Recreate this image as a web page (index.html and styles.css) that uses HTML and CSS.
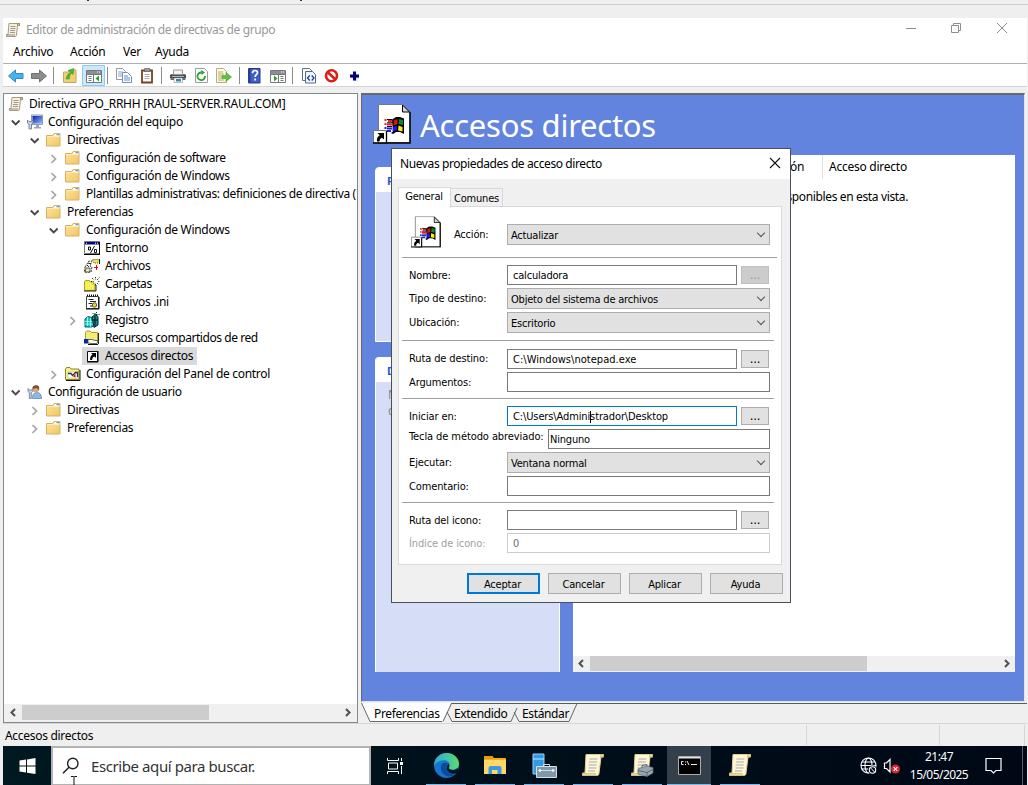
FILE: index.html
```html
<!DOCTYPE html>
<html lang="es">
<head>
<meta charset="utf-8">
<title>Editor de administración de directivas de grupo</title>
<link rel="stylesheet" href="styles.css">
</head>
<body>
<svg class="sprite" aria-hidden="true">
  <defs>
    <linearGradient id="gFold" x1="0" y1="0" x2="1" y2="1"><stop offset="0" stop-color="#ffe39a"/><stop offset="1" stop-color="#efc668"/></linearGradient>
    <linearGradient id="gEdge" x1="0" y1="0" x2="1" y2="0"><stop offset="0" stop-color="#2aa9dc"/><stop offset="1" stop-color="#5ddb6b"/></linearGradient>
    <linearGradient id="gMon" x1="0" y1="0" x2="1" y2="1"><stop offset="0" stop-color="#0a1fa8"/><stop offset="1" stop-color="#8fb8ff"/></linearGradient>
  </defs>
  <symbol id="scroll" viewBox="0 0 16 16"><path d="M4 1.500h10.500v2H12.500l-1 9.500c0 1-.5 1.500-1.500 1.500H1.500v-2H3z" fill="#f7efd8" stroke="#a59c85"/><path d="M12.500 1.500h2v2h-2zM1 13h9" fill="#d8cb98" stroke="#968e76"/><path d="M5.500 4.500h5M5.500 6.500h5M5 8.500h5M5 10.500h5" stroke="#9c9ca0"/></symbol>
  <symbol id="folder" viewBox="0 0 16 16"><path d="M.5 3.500h6.500l1-2h6v12.500H.5z" fill="url(#gFold)" stroke="#d8b162"/><path d="M8.500 2h5v2H7.500z" fill="#fff"/><path d="M10.500 2h3v1.300h-3z" fill="#4ca3e6"/><path d="M1 4.500h12.500" stroke="#ffedb8" fill="none"/></symbol>
  <symbol id="computer" viewBox="0 0 16 16"><path d="M4.500 1h11v9.500h-11z" fill="#d9e2ee" stroke="#8c9bb0"/><path d="M5.500 2H15v7.500H5.500z" fill="url(#gMon)"/><path d="M9 11h3v2h2v1.500H7V13h2z" fill="#97a6bd"/><path d="M.5 6v3L2 10.200V15h2.500v-4.800L6 9V6L4.500 7.500H2z" fill="#c9d4e2" stroke="#60718c" stroke-width=".8"/></symbol>
  <symbol id="user" viewBox="0 0 16 16"><path d="M5.500 14.500c0-4 1-5.500 4-6 3.500 0 5 2 5 6z" fill="#8fb8e2" stroke="#587da8" stroke-width=".7"/><circle cx="9" cy="5.500" r="3" fill="#dda873"/><path d="M5.500 5C5 1.500 8 .8 10 1.300c2.500.5 2.500 3 2 5L9.500 4z" fill="#7b5330"/><path d="M1 4.500v3L2.300 8.700v5.800h2V8.700L5.800 7.500v-3L4.500 6H2.300z" fill="#c2d0df" stroke="#667b95" stroke-width=".8"/></symbol>
  <symbol id="envi" viewBox="0 0 16 16"><path d="M.5 1.500h15v12H.5z" fill="#fff" stroke="#777"/><path d="M0 14.500h16M15.500 2v12" stroke="#000"/><path d="M1 2h14v2.500H1z" fill="#000082"/><path d="M2 3.200h1M11 3.200h1M13 3.200h1" stroke="#fff"/><path d="M10.500 6l-4 7M4.500 7h2v3h-2zM10.500 9.500h2v3h-2z" fill="none" stroke="#111"/></symbol>
  <symbol id="files" viewBox="0 0 16 16"><path d="M1 9l4-6h3L6 8l2 1-1 5H.5z" fill="#fff" stroke="#333" stroke-dasharray="2 1"/><path d="M2 10h4v4H1z" fill="#e8e6c2" stroke="#222" stroke-width=".7"/><path d="M3 7l2 2M4 5l3 1" stroke="#222"/><path d="M8.500 1.500h7v3.500H10z" fill="#f0e535" stroke="#555" stroke-dasharray="1 1"/><path d="M15.500 1v5" stroke="#111"/><path d="M12.500 7v5M10 9.500h4" stroke="#e00"/></symbol>
  <symbol id="nfold" viewBox="0 0 16 16"><path d="M.5 6l1-1.500h4L6.500 6H11v8.500H.5z" fill="#f3ec46" stroke="#a5a218"/><path d="M0 15h12V9" stroke="#222" fill="none"/><path d="M2 8h8M2 10h8M2 12h8" stroke="#fffcae" stroke-dasharray="1 1"/><path d="M11.500 1v9M8 2l7 7M15.500 1.500L8.500 8.500M7 5.500h9" stroke="#222" stroke-dasharray="1.200 1.200"/><circle cx="11.500" cy="5.500" r="1.700" fill="#fff"/></symbol>
  <symbol id="ini" viewBox="0 0 16 16"><path d="M2.500 2.500h12v12h-12z" fill="#fff" stroke="#444"/><path d="M2 15h13V3" stroke="#000" fill="none"/><path d="M3 1.500h11" stroke="#111" stroke-dasharray="1 1" stroke-width="2"/><path d="M4.500 5.500h5M6 7.500h6M4.500 9.500h4M6 12h3" stroke="#222"/><circle cx="10.500" cy="11" r="2.200" fill="#e4dc2b" stroke="#555"/></symbol>
  <symbol id="reg" viewBox="0 0 16 16"><path d="M1 7l3-2.500 4 1v3l3-1v4l-3 3.500H1z" fill="#12c4c4" stroke="#066"/><path d="M1 9.500h9M1 12h8M3.500 5v9M6.500 6v9" stroke="#cff" stroke-width=".7"/><path d="M8 5l3-2.500 3 2V13l-4 2.500z" fill="#0a8f93" stroke="#022"/><path d="M11 4v10M9 8h5" stroke="#011"/><path d="M8.500 1.500h3M12.500 0v4M10.500 2.500h5" stroke="#033" stroke-dasharray="1 1"/></symbol>
  <symbol id="share" viewBox="0 0 16 16"><path d="M1.500 11V2.500l1-1.500H6l1.500 1.500h6V11h-9z" fill="#f3ec72" stroke="#a5a136"/><path d="M14.500 3v11" stroke="#222"/><path d="M0 9h4v4.500H0z" fill="#0028a4"/><path d="M4 9.500h4l3 1h3l-1 3H7l-3-.5z" fill="#fff" stroke="#444" stroke-width=".8"/><path d="M4 14.500h10" stroke="#111"/></symbol>
  <symbol id="lnk" viewBox="0 0 16 16"><path d="M3.500 3.500h10v10h-10z" fill="#fff" stroke="#111"/><path d="M14 3v11H3" stroke="#000" fill="none"/><path d="M7 5h5v5l-1.500-1.500C8.800 9 8.200 10 8.200 12H6.200C5.800 9.500 6.800 8 8.600 6.600z" fill="#000"/></symbol>
  <symbol id="panel" viewBox="0 0 16 16"><path d="M.5 13.500V3l1-1.500H5l1 1.500h8v10.500z" fill="#f7f08b" stroke="#8b8822"/><path d="M1 14.500h14V4" stroke="#111" fill="none"/><path d="M3 6h10v6H3z" fill="#fff" stroke="#aaa" stroke-width=".5"/><path d="M3 7.500h3l1.500 2 3-3h2V11" stroke="#333" fill="none" stroke-width="1.300"/><path d="M8 10.500l2.500-3v4z" fill="#cf1414"/></symbol>
  <symbol id="down" viewBox="0 0 16 16"><path d="M4.800 6.500l3.900 3.900 3.900-3.900" fill="none" stroke="#484848" stroke-width="1.900"/></symbol>
  <symbol id="right" viewBox="0 0 16 16"><path d="M6.500 5l4 4-4 4" fill="none" stroke="#a5a5a5" stroke-width="1.700"/></symbol>
  <symbol id="bigLnk" viewBox="0 0 38 40">
    <path d="M5.500.5h24L37 8v30.500H5.500z" fill="#fff" stroke="#777"/><path d="M37 8v31H5" fill="none" stroke="#000" stroke-width="1.500"/><path d="M29.500 1l7 7h-7z" fill="#d4d4d4" stroke="#000"/>
    <path d="M19 15.500l4-2.500h4l4 1.500v15.500l-4-2h-4l-3 2-2-1 2-1.500z" fill="#000"/>
    <path d="M21 16.500l3.500-1.500v5l-4 1.500z" fill="#e21212"/><path d="M26 15l4 1v5l-4.500-1z" fill="#0a8a26"/><path d="M20 23l4-1.500v4.500l-4.500 1.500z" fill="#1818f0"/><path d="M25.500 21.500l4 1.500v4.500l-4.500-1z" fill="#ffeb12"/>
    <path d="M11.500 16h2M15 17h4M11.500 20h2M14 20.500h6" stroke="#e22" stroke-width="2"/><path d="M11.500 24h2M14 24.500h5M11.500 28h1M14 27h4" stroke="#22d" stroke-width="2"/><path d="M14 15.500h5M14 18.800h6M14 22.500h5" stroke="#000"/>
    <path d="M.5 26.500h13v12.500H.5z" fill="#fff" stroke="#777"/><path d="M13.500 27v12H0" stroke="#000" fill="none" stroke-width="1.300"/><path d="M4.500 29h6.500v6.500l-2-1.800c-2 1-2.400 2-2.400 3.800H4c-.5-3 .5-4.800 2.700-6.300z" fill="#000"/>
  </symbol>
  <symbol id="bscroll" viewBox="0 0 24 24"><path d="M5 1.500h17.500v2.500H20L18 20c0 2-1 2.500-2.500 2.500H1.500V20H4z" fill="#fff6d4" stroke="#e0cf95"/><path d="M19.500 1.500h3v2.500h-3zM1.500 20.500h13v2h-13z" fill="#e7d9a0" stroke="#bda968" stroke-width=".5"/><path d="M8.500 6h8M8 9h8M7.500 12h8M7.500 15h8M7 18h7" stroke="#a9a9b6"/></symbol>
</svg>

<div class="screen">
  <div class="behind"><i></i><i></i></div>

  <div class="window">
    <header class="titlebar">
      <svg class="i16"><use href="#scroll"/></svg>
      <span class="title">Editor de administración de directivas de grupo</span>
      <svg class="winctl" viewBox="0 0 104 14"><path d="M1 7.500h10M46.500 4.500h7v7h-7zM48.500 4.500v-2h7v7h-2M92 2l10 10M102 2L92 12" fill="none" stroke="#8c8c8c"/></svg>
    </header>
    <nav class="menu"><span class="m1">Archivo</span><span class="m2">Acción</span><span class="m3">Ver</span><span>Ayuda</span></nav>
    <div class="toolbar">
      <svg width="356" height="22" viewBox="0 0 356 22">
        <path d="M5.500 12l7-6v3.500h7.500v5h-7.500V18z" fill="#44b4ee" stroke="#3a86b8"/>
        <path d="M43.500 12l-7-6v3.500h-8v5h8V18z" fill="#8d8d8d" stroke="#707070"/>
        <path d="M50.500 3v17M104.500 3v17M158.500 3v17M236.500 3v17M289.500 3v17" stroke="#8d8d8d"/>
        <path d="M60.500 18.500V8h5l1-2H73v12.500z" fill="#f2ce77" stroke="#c9a462"/><path d="M63 15c1-4 2-5 4.500-7L65 6.500l6-2-1 6-1.500-1.500c-2 2-2 4-2 6z" fill="#46bc2c" stroke="#3f9a30" stroke-width=".6"/>
        <path d="M79.500 1.500h22v20h-22z" fill="#cce8ff" stroke="#90c8f6"/>
        <path d="M83.500 6.500h15v12h-15z" fill="#fff" stroke="#75797e"/><path d="M84 7h14v3H84z" fill="#8b8e92"/><path d="M94 8h1M96 8h1" stroke="#fff"/><path d="M90.500 11v7M84 10.500h14" stroke="#75797e"/>
        <path d="M85.500 12.500h3M85.500 14.500h3M85.500 16.500h3" stroke="#777"/><path d="M96 11.500v6l-3.500-3z" fill="#2ba129"/>
        <path d="M113.500 4.500h6l3 3v8h-9z" fill="#fff" stroke="#999"/><path d="M115 8h5M115 10h5M115 12h4" stroke="#7fa9d5"/><path d="M119.500 8.500h5l4 4v6h-9z" fill="#fff" stroke="#7b8fa9"/><path d="M121 12h4M121 14h6M121 16h6" stroke="#5c91cd"/>
        <path d="M139 6.500h10v12h-10z" fill="#fff" stroke="#76421e" stroke-width="1.800"/><path d="M141.500 4.500h5.500v3h-5.500z" fill="#999" stroke="#444" stroke-width=".5"/><path d="M141.500 10.500h5M141.500 12.500h5M141.500 14.500h5" stroke="#a6a6a6"/>
        <path d="M167.500 10h15v6h-15z" fill="#666d75"/><path d="M167 11h16v3h-16z" fill="#4b5157"/><path d="M170.500 6h9v4.500h-9z" fill="#f2f2f2" stroke="#999"/><path d="M171 14h8.500v4.500H171z" fill="#fff" stroke="#777" stroke-width=".5"/><path d="M173 15h5v2.500h-5z" fill="#2e87b5"/><path d="M169 12.500h12" stroke="#adb3b8"/>
        <path d="M192.500 4.500h9l3 3v11h-12z" fill="#fff" stroke="#9c9c9c"/><path d="M202 12A3.800 3.800 0 1 1 198.500 8.500" stroke="#28a52b" fill="none" stroke-width="1.800"/><path d="M198 6l4 2.500-3.500 2.500z" fill="#28a52b"/>
        <path d="M213.500 4.500h7l3 3v11h-10z" fill="#fffbd7" stroke="#b6aa87"/><path d="M215 8h5M215 10h6M215 12h4M215 14h4M215 16h6" stroke="#b3aa85"/><path d="M219 11.500h4V8.500l5.500 4.500-5.500 4.500v-3H219z" fill="#55c73d" stroke="#4a9e3e" stroke-width=".6"/>
        <path d="M245.500 4.500h11.500v14.500h-11.500z" fill="#3c5fc8" stroke="#263b88"/><path d="M245 5h2.500v14H245z" fill="#2c3f94"/><path d="M249.500 9.300c0-3.600 5-3.600 5-.6 0 2-2.400 2-2.400 4.300M252.100 14.500v2" stroke="#fff" stroke-width="1.700" fill="none"/>
        <g transform="translate(184 0)"><path d="M83.500 6.500h15v12h-15z" fill="#fff" stroke="#75797e"/><path d="M84 7h14v3H84z" fill="#8b8e92"/><path d="M94 8h1M96 8h1" stroke="#fff"/><path d="M91.500 11v7M84 10.500h14" stroke="#75797e"/><path d="M93.500 12.500h3M93.500 14.500h3M93.500 16.500h3" stroke="#777"/><path d="M87 11.500v6l3.500-3z" fill="#2ba129"/></g>
        <path d="M299.500 4.500h7l3 3v9h-10z" fill="#fff" stroke="#5f7387"/><path d="M302.500 7.500h7l3 3v8.500h-10z" fill="#f3f8fc" stroke="#4e6b8b"/><path d="M306.800 11.500l-2.300 2.500 2.300 2.500M308.700 11.500l2.300 2.500-2.300 2.500" fill="none" stroke="#1b3fa8" stroke-width="1.300"/>
        <circle cx="328.500" cy="11.800" r="5.500" fill="#fff" stroke="#de1e12" stroke-width="2.600"/><path d="M324.800 8.300l7.400 7" stroke="#de1e12" stroke-width="2.600"/>
        <path d="M348 13.200h8.500M352.500 9v8" stroke="#b9b9c8" stroke-width="2"/><path d="M347 12h9M351.500 7.500v9" stroke="#010180" stroke-width="3"/>
      </svg>
    </div>

    <div class="panes">
      <aside class="tree">
        <ul class="rows">
          <li class="l0"><svg class="i16"><use href="#scroll"/></svg><span class="t0">Directiva GPO_RRHH [RAUL-SERVER.RAUL.COM]</span></li>
          <li class="l1"><svg class="ch"><use href="#down"/></svg><svg class="i16"><use href="#computer"/></svg><span>Configuración del equipo</span></li>
          <li class="l2"><svg class="ch"><use href="#down"/></svg><svg class="i16"><use href="#folder"/></svg><span>Directivas</span></li>
          <li class="l3"><svg class="ch"><use href="#right"/></svg><svg class="i16"><use href="#folder"/></svg><span class="tight">Configuración de software</span></li>
          <li class="l3"><svg class="ch"><use href="#right"/></svg><svg class="i16"><use href="#folder"/></svg><span>Configuración de Windows</span></li>
          <li class="l3"><svg class="ch"><use href="#right"/></svg><svg class="i16"><use href="#folder"/></svg><span class="tight">Plantillas administrativas: definiciones de directiva (</span></li>
          <li class="l2"><svg class="ch"><use href="#down"/></svg><svg class="i16"><use href="#folder"/></svg><span>Preferencias</span></li>
          <li class="l3"><svg class="ch"><use href="#down"/></svg><svg class="i16"><use href="#folder"/></svg><span>Configuración de Windows</span></li>
          <li class="l4"><i class="ch"></i><svg class="i16"><use href="#envi"/></svg><span>Entorno</span></li>
          <li class="l4"><i class="ch"></i><svg class="i16"><use href="#files"/></svg><span>Archivos</span></li>
          <li class="l4"><i class="ch"></i><svg class="i16"><use href="#nfold"/></svg><span class="tighter">Carpetas</span></li>
          <li class="l4"><i class="ch"></i><svg class="i16"><use href="#ini"/></svg><span>Archivos .ini</span></li>
          <li class="l4"><svg class="ch"><use href="#right"/></svg><svg class="i16"><use href="#reg"/></svg><span class="tighter">Registro</span></li>
          <li class="l4"><i class="ch"></i><svg class="i16"><use href="#share"/></svg><span class="tighter">Recursos compartidos de red</span></li>
          <li class="l4"><i class="ch"></i><b class="sel"><svg class="i16"><use href="#lnk"/></svg><span>Accesos directos</span></b></li>
          <li class="l3"><svg class="ch"><use href="#right"/></svg><svg class="i16"><use href="#panel"/></svg><span>Configuración del Panel de control</span></li>
          <li class="l1"><svg class="ch"><use href="#down"/></svg><svg class="i16"><use href="#user"/></svg><span class="tight">Configuración de usuario</span></li>
          <li class="l2"><svg class="ch"><use href="#right"/></svg><svg class="i16"><use href="#folder"/></svg><span>Directivas</span></li>
          <li class="l2"><svg class="ch"><use href="#right"/></svg><svg class="i16"><use href="#folder"/></svg><span>Preferencias</span></li>
        </ul>
        <div class="hscroll tree-scroll">
          <svg viewBox="0 0 18 17"><path d="M11 5L7.500 8.500 11 12" fill="none" stroke="#505050" stroke-width="2"/></svg>
          <i class="thumb thumb-tree"></i>
          <svg viewBox="0 0 18 17"><path d="M7 5l3.500 3.500L7 12" fill="none" stroke="#505050" stroke-width="2"/></svg>
        </div>
      </aside>

      <main class="result">
        <div class="blue">
          <div class="head"><svg width="38" height="40"><use href="#bigLnk"/></svg><h1>Accesos directos</h1></div>
          <div class="cols">
            <div class="side">
              <section class="card first"><h2>P</h2></section>
              <section class="card second"><h2>D</h2><p>N<br>d</p></section>
            </div>
            <div class="list">
              <div class="lhead"><span class="c1">ón</span><span class="c2">Acceso directo</span></div>
              <p class="empty">sponibles en esta vista.</p>
              <div class="hscroll list-scroll">
                <svg viewBox="0 0 18 17"><path d="M10 5L6.500 8.500 10 12" fill="none" stroke="#505050" stroke-width="2"/></svg>
                <i class="thumb thumb-list"></i>
                <svg viewBox="0 0 18 17"><path d="M8 5l3.500 3.500L8 12" fill="none" stroke="#505050" stroke-width="2"/></svg>
              </div>
            </div>
          </div>
        </div>
        <div class="tabs">
          <svg width="666" height="20" viewBox="0 0 666 20"><path d="M0 0h90l-9 18.500H9z" fill="#fff"/><path d="M90 .5h576" stroke="#5a5a5a"/><path d="M.5 0l8.500 18.500M9 18.500h72M82 18.500L90.500.5M86 9l5 9.500h59M150 18.500L156 5M153 9l5 9.500h50M208 18.500L216 .5" fill="none" stroke="#666"/></svg>
          <div class="labels"><span class="b1">Preferencias</span><span class="b2">Extendido</span><span>Estándar</span></div>
        </div>
      </main>
    </div>
    <footer class="status"><span>Accesos directos</span><i></i><i></i><i></i></footer>
  </div>

  <div class="taskbar">
    <div class="start"><svg width="17" height="16" viewBox="0 0 17 16"><path d="M.5 2.500L7 1.500v6H.5zM8 1.400L16.500 0v7.500H8zM.5 8.500H7v6l-6.500-1zM8 8.500h8.500V16L8 14.700z" fill="#fff"/></svg></div>
    <div class="search"><svg width="18" height="18" viewBox="0 0 18 18"><circle cx="10.800" cy="6.500" r="5.200" fill="none" stroke="#222" stroke-width="1.400"/><path d="M7 10.200L1 16.300" stroke="#222" stroke-width="1.500"/></svg><span>Escribe aquí para buscar.</span><svg class="cursor" width="8" height="10" viewBox="0 0 8 10"><path d="M1 .5h2.500l.5.500.5-.5H7M4 1v9" fill="none" stroke="#111"/></svg></div>
    <div class="tview"><svg width="17" height="16" viewBox="0 0 17 16"><path d="M.5 0v2.500h11V0M.5 16v-2.500h11V16M1.500 5h9v6h-9zM14.500 0v3M14.500 8v8" fill="none" stroke="#fff"/><path d="M13 4h3v3h-3z" fill="#fff"/></svg></div>
    <div class="apps">
      <div class="app"><svg width="25" height="25" viewBox="0 0 24 24"><circle cx="12" cy="12" r="12" fill="#1476ce"/><path d="M0 12C0 3 8 0 12 0c8 0 12 6 12 10 0 4-3 6-6 6s-4-1-4-2 1-1 1-3-2-4-5-4c-5 0-9 3-10 5z" fill="url(#gEdge)"/><path d="M8 10c-3 4-1 10 4 12 4 1.500 8 0 10.500-4-4 2-9 1-10-3-1-2 0-4 1-5-2-1-4-1-5.500 0z" fill="#0b4d9c"/><path d="M14 10.500c1.500 1.500.3 3 .3 3.800 0 1.200 1.700 1.900 4 1.900 1.800 0 3.500-.6 4.500-1.800l1 1.600-1.500 3c-4 1.300-8 .3-9.500-2.500-1.200-2.300-.3-5 1.200-6z" fill="#04131c"/></svg></div>
      <div class="app"><svg width="22" height="20" viewBox="0 0 22 20"><path d="M0 2q0-1 1-1h7l2 2h11q1 0 1 1v14H0z" fill="#f7ae1e"/><path d="M0 5h22v14H0z" fill="#ffd869"/><path d="M0 1h9v3H0z" fill="#e89b0b"/><path d="M4.500 19v-6q0-2 2-2h9q2 0 2 2v6h-4v-4H8v4z" fill="#3d99e2"/></svg></div>
      <div class="app"><svg width="25" height="25" viewBox="0 0 25 25"><path d="M1 1h11v20H1z" fill="#2e9be4" stroke="#9bd2f8"/><path d="M1 6h11" stroke="#c7e7fc"/><path d="M4.500 13.500h20v11h-20z" fill="#7f99a9" stroke="#d2dfe7"/><path d="M11.500 13.500v-2h6v2M6 17.500h17" fill="none" stroke="#d2dfe7"/><path d="M8 16v3M21 16v3" stroke="#fff" stroke-width="1.300"/></svg></div>
      <div class="app"><svg width="24" height="24"><use href="#bscroll"/></svg></div>
      <div class="app"><svg width="24" height="24"><use href="#bscroll"/><path d="M8 16l8-3 7 1.500V20l-6 3.500-9-2.500z" fill="#9aa7b2" stroke="#5d6975" stroke-width=".7"/><path d="M12 14.500v-2l5-1v2M8 17.500l9 2 6-3M17 19v4" fill="none" stroke="#5a6570"/></svg></div>
      <div class="app active"><svg width="23" height="19" viewBox="0 0 23 19"><path d="M.5.500h22v18H.5z" fill="#000" stroke="#a9adb0"/><path d="M1 1h21v1.500H1z" fill="#e3e3e3"/><path d="M5.500 5.500H3.500v3h2M7.500 5.500v1M7.500 8v1M9 5l2 4M13 8.500h6" stroke="#eee" fill="none"/></svg></div>
      <div class="app"><svg width="24" height="24"><use href="#bscroll"/></svg></div>
    </div>
    <div class="tray">
      <svg class="globe" width="42" height="18" viewBox="0 0 42 18"><g fill="none" stroke="#fff" stroke-width="1.100"><circle cx="8.500" cy="8.500" r="7.500"/><ellipse cx="8.500" cy="8.500" rx="3.500" ry="7.500"/><path d="M1 8.500h15M2 5h13M2 12h10"/></g><circle cx="12.500" cy="13" r="4.500" fill="#010b17"/><circle cx="12.500" cy="13" r="3.200" fill="none" stroke="#fff" stroke-width="1.100"/><path d="M10.300 10.700l4.500 4.500" stroke="#fff"/><path d="M24.500 6v5.500h2l3.500 3.500V2.500L26.500 6z" fill="none" stroke="#fff" stroke-width="1.200"/><circle cx="35.500" cy="12" r="4.500" fill="#d9232e"/><path d="M33.700 10.200l3.600 3.600M37.300 10.200l-3.600 3.600" stroke="#fff" stroke-width="1.200"/></svg>
      <div class="clock"><span>21:47</span><span>15/05/2025</span></div>
      <svg class="note" width="17" height="18" viewBox="0 0 17 18"><path d="M1 1.500h15v12h-5L8.500 16 6 13.500H1z" fill="none" stroke="#fff" stroke-width="1.200"/></svg>
    </div>
    <i class="peek"></i>
  </div>

  <div class="dialog">
    <header><span>Nuevas propiedades de acceso directo</span><svg width="12" height="12" viewBox="0 0 12 12"><path d="M1 1l10 10M11 1L1 11" stroke="#111" stroke-width="1.100"/></svg></header>
    <div class="dtabs"><span class="on">General</span><span class="off">Comunes</span></div>
    <div class="sheet">
      <div class="arow"><svg width="30" height="32" viewBox="0 0 38 40"><use href="#bigLnk" width="38" height="40"/></svg><label>Acción:</label><div class="select">Actualizar<i></i></div></div>
      <hr class="wide">
      <div class="row g1"><label>Nombre:</label><div class="input">calculadora</div><button class="dots dis">...</button></div>
      <div class="row sel-row g2"><label>Tipo de destino:</label><div class="select">Objeto del sistema de archivos<i></i></div></div>
      <div class="row sel-row g2"><label>Ubicación:</label><div class="select">Escritorio<i></i></div></div>
      <hr>
      <div class="row g3"><label>Ruta de destino:</label><div class="input path">C:\Windows\notepad.exe</div><button class="dots">...</button></div>
      <div class="row g2"><label>Argumentos:</label><div class="input"></div></div>
      <hr class="h2">
      <div class="row g1"><label>Iniciar en:</label><div class="input focus">C:\Users\Admini<i class="caret"></i>strador\Desktop</div><button class="dots">...</button></div>
      <div class="row g2 key"><label>Tecla de método abreviado:</label><div class="input">Ninguno</div></div>
      <div class="row sel-row g2"><label>Ejecutar:</label><div class="select">Ventana normal<i></i></div></div>
      <div class="row g2"><label>Comentario:</label><div class="input"></div></div>
      <hr class="h2">
      <div class="row g1"><label>Ruta del icono:</label><div class="input"></div><button class="dots">...</button></div>
      <div class="row g2 off-row"><label>Índice de icono:</label><div class="input">0</div></div>
    </div>
    <div class="btns"><button class="def">Aceptar</button><button>Cancelar</button><button>Aplicar</button><button>Ayuda</button></div>
  </div>
</div>
</body>
</html>
```
FILE: styles.css
```css
* { box-sizing: border-box; }
body { margin: 0; background: #efefef; font: 12px/18px "Noto Sans", "Open Sans", sans-serif; letter-spacing: -0.3px; color: #000; }
svg { display: block; flex: none; }
h1, h2, p, ul { margin: 0; padding: 0; font-weight: normal; }
.sprite { position: absolute; width: 0; height: 0; }
.screen { position: relative; width: 1028px; height: 785px; overflow: hidden; display: flex; flex-direction: column; }
.behind { height: 18px; flex: none; display: flex; gap: 211px; padding-left: 87px; background: linear-gradient(#cdcdcd, #cdcdcd) 0 4px / 100% 1px no-repeat; }
.behind i { width: 2px; height: 1px; background: #333; }
.i16 { width: 16px; height: 16px; flex: none; }

.window { width: 1024px; margin-left: 3px; height: 728px; flex: none; display: flex; flex-direction: column; }
.titlebar { height: 23px; background: #fff; display: flex; align-items: center; padding-left: 2px; gap: 5px; flex: none; }
.title { color: #999; flex: 1; padding-top: 1px; letter-spacing: -0.38px; }
.winctl { width: 104px; height: 14px; margin-right: 18px; margin-top: -3px; }
.menu { height: 22px; flex: none; background: #fff; padding: 0 0 0 10px; display: flex; align-items: center; letter-spacing: -0.25px; }
.m1 { width: 57px; }
.m2 { width: 53px; }
.m3 { width: 32px; }
.toolbar { height: 24px; flex: none; background: #fff; border-top: 1px solid #b0b0b0; border-bottom: 1px solid #d5d5d5; }
.panes { display: flex; height: 636px; padding-top: 6px; gap: 3px; flex: none; }

.tree { width: 355px; border: 1px solid #828790; background: #fff; display: flex; flex-direction: column; height: 630px; }
.rows { list-style: none; padding-top: 1px; flex: 1; overflow: hidden; }
.rows li { height: 18px; display: flex; align-items: center; white-space: nowrap; overflow: hidden; }
.rows .i16 { margin-right: 5px; }
.ch { width: 16px; height: 16px; margin-right: 4px; flex: none; }
.t0 { letter-spacing: -0.25px; }
.tight { letter-spacing: -0.36px; }
.tighter { letter-spacing: -0.44px; }
.l0 { padding-left: 4px; }
.l1 { padding-left: 3px; }
.l2 { padding-left: 22px; }
.l3 { padding-left: 41px; }
.l4 { padding-left: 60px; }
.sel { display: flex; align-items: center; height: 18px; font-weight: normal; background: #d9d9d9; margin-left: -2px; padding: 0 4px 0 2px; }
.hscroll { height: 18px; flex: none; background: #f0f0f0; display: flex; align-items: flex-start; }
.hscroll svg { width: 18px; height: 17px; margin-top: -1px; }
.thumb { height: 15px; background: #cdcdcd; }
.tree-scroll { padding-top: 1px; }
.thumb-tree { width: 187px; margin-right: auto; }

.result { width: 666px; display: flex; flex-direction: column; }
.blue { height: 610px; border: 1px solid #696969; border-top-width: 2px; border-right-color: #e3e3e3; border-bottom-color: #e3e3e3; background: #6284de; padding: 9px 9px 29px 11px; display: flex; flex-direction: column; margin-right: 2px; }
.head { height: 51px; flex: none; display: flex; gap: 9px; }
.head h1 { color: #fff; font-size: 31px; line-height: 42px; letter-spacing: -0.25px; white-space: nowrap; }
.cols { display: flex; flex: 1; gap: 13px; min-height: 0; }
.side { width: 185px; padding-top: 12px; display: flex; flex-direction: column; gap: 15px; margin-left: 2px; }
.card { background: #d6ddf7; border: 1px solid #fff; border-bottom: 0; border-radius: 4px 4px 0 0; overflow: hidden; }
.card h2 { height: 24px; background: #fff; padding: 4px 0 0 11px; font-weight: bold; font-size: 11px; color: #215dc6; }
.card p { padding: 5px 0 0 12px; color: #888; line-height: 16px; }
.first { height: 175px; border-bottom: 1px solid #fff; }
.second { flex: 1; }
.list { flex: 1; background: #fff; display: flex; flex-direction: column; }
.lhead { height: 24px; display: flex; line-height: 24px; flex: none; }
.c1 { width: 250px; border-right: 1px solid #e0e0e0; text-align: right; padding-right: 18px; }
.c2 { padding-left: 6px; letter-spacing: -0.25px; }
.empty { flex: 1; padding-top: 9px; width: 335px; text-align: right; white-space: nowrap; letter-spacing: -0.36px; }
.list-scroll { height: 16px; }
.list-scroll .thumb-list { width: 277px; margin: 0 auto 0 -1px; }
.tabs { display: grid; height: 20px; margin-top: 1px; }
.tabs > * { grid-area: 1 / 1; }
.labels { display: flex; padding-left: 13px; line-height: 22px; height: 20px; letter-spacing: -0.36px; }
.b1 { width: 80px; }
.b2 { width: 68px; }
.status { height: 23px; border-top: 1px solid #d5d5d5; display: flex; align-items: center; padding: 0 2px 0 2px; flex: none; }
.status span { flex: 1; padding-top: 2px; }
.status i { width: 1px; height: 20px; background: #d5d5d5; margin-right: 132px; }
.status i:nth-of-type(2) { margin-right: 84px; }
.status i:last-child { margin-right: 0; }

.taskbar { height: 39px; margin-left: 3px; width: 1024px; background: linear-gradient(90deg, #001820, #000c18 70%, #000816); display: flex; flex: none; color: #fff; }
.start { width: 48px; padding: 12px 0 0 16px; }
.search { position: relative; width: 320px; border: 2px solid #b2b2b2; border-bottom-width: 1px; background: #fff; color: #333; display: flex; align-items: center; padding-left: 9px; gap: 11px; font-size: 15px; letter-spacing: -0.41px; }
.cursor { position: absolute; left: 17px; bottom: -2px; }
.tview { width: 45px; padding: 12px 0 0 16px; }
.apps { display: flex; gap: 9px; padding-left: 10px; }
.app { width: 40px; border-bottom: 1px solid #76b9ed; display: flex; align-items: center; justify-content: center; }
.active { background: #33404a; width: 44px; margin: 0 0 0 -4px; }
.tray { margin-left: auto; display: flex; align-items: center; padding-right: 20px; }
.globe { margin-right: 8px; }
.clock { width: 58px; display: flex; flex-direction: column; align-items: center; white-space: nowrap; font-size: 12px; letter-spacing: -0.55px; line-height: 18px; }
.note { margin-left: 17px; }
.peek { width: 5px; border-left: 1px solid #59636c; }

.dialog { position: absolute; left: 391px; top: 148px; width: 400px; height: 455px; border: 1px solid #4a4f5c; background: #f0f0f0; font-family: "DejaVu Sans Condensed", "DejaVu Sans", sans-serif; font-size: 11px; letter-spacing: -0.2px; }
.dialog header { height: 30px; background: #fff; display: flex; align-items: center; justify-content: space-between; padding: 0 9px 2px 8px; font: 12px "Noto Sans", sans-serif; letter-spacing: -0.4px; }
.dialog header span { padding-top: 1px; }
.dtabs { display: flex; align-items: flex-end; padding-left: 6px; height: 28px; line-height: 18px; }
.on { width: 53px; height: 21px; background: #fff; border: 1px solid #d9d9d9; border-bottom: 0; text-align: center; margin-bottom: -1px; position: relative; padding-right: 1px; }
.off { width: 52px; height: 19px; border: 1px solid #d9d9d9; border-left: 0; border-bottom: 0; text-align: center; line-height: 19px; }
.sheet { margin-left: 6px; width: 384px; height: 359px; border: 1px solid #d9d9d9; background: #fff; margin-top: -1px; }
.arow { display: flex; height: 50px; padding: 9px 0 0 12px; }
.arow label { width: 53px; margin-left: 13px; line-height: 37px; }
.arow .select { margin: 8px 0 0; }
hr { margin: 7px 0 0 3px; border: 0; height: 1px; width: 372px; background: #a0a0a0; }
.wide { margin-top: 0; width: 375px; }
.h2 { margin-top: 6px; }
.row { display: flex; height: 20px; padding-left: 10px; }
.sel-row { height: 21px; }
.g1 { margin-top: 7px; }
.g2 { margin-top: 3px; }
.g3 { margin-top: 8px; }
.row label { width: 98px; line-height: 21px; flex: none; white-space: nowrap; letter-spacing: -0.12px; }
.g3 label { line-height: 19px; }
.input { width: 263px; border: 1px solid #7a7a7a; background: #fff; padding-left: 5px; line-height: 19px; white-space: nowrap; }
.path { letter-spacing: 0.03px; }
.row .input:has(+ .dots) { width: 230px; }
.select { width: 263px; height: 21px; border: 1px solid #adadad; background: #e1e1e1; padding-left: 3px; line-height: 21px; position: relative; }
.select i { position: absolute; right: 5px; top: 5px; width: 6px; height: 6px; border: solid #555; border-width: 0 1px 1px 0; transform: rotate(45deg); }
.focus { border-color: #0078d7; letter-spacing: -0.12px; }
.caret { display: inline-block; width: 1px; height: 12px; background: #000; margin: 0 -1px 0 0; vertical-align: -3px; }
.row.key label { width: 139px; line-height: 16px; letter-spacing: -0.09px; }
.key .input { width: 222px; padding-left: 1px; }
.off-row { color: #a0a0a0; }
.off-row .input { border-color: #ccc; color: #6d6d6d; }
.dialog button { font: inherit; letter-spacing: inherit; color: #000; background: #e1e1e1; border: 1px solid #adadad; width: 73px; height: 21px; padding: 2px 2px 0 0; }
.dialog button.dots { width: 28px; height: 18px; margin: 1px 0 0 4px; padding: 0; line-height: 14px; font-size: 13px; }
.dialog button.dis { color: #999; background: #ccc; border-color: #bfbfbf; }
.btns { display: flex; gap: 8px; padding: 8px 0 0 75px; }
.dialog .btns .def { border: 2px solid #0078d7; padding-top: 1px; }
```
